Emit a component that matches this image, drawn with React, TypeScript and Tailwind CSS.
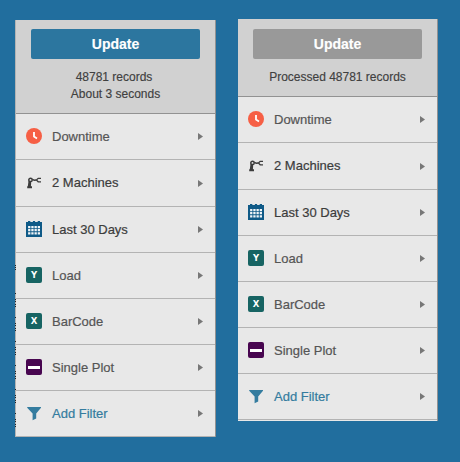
import type { ReactNode } from "react";

const Clock = () => (
  <svg width="16" height="16" viewBox="0 0 16 16">
    <circle cx="8" cy="8" r="8" fill="#f65f45" />
    <path d="M8 4V8.6L11 10.4" fill="none" stroke="#fff" strokeWidth="1.8" />
  </svg>
);

const Robot = () => (
  <svg width="16" height="16" viewBox="0 0 16 16" fill="none" stroke="#3c3c3c">
    <circle cx="4.5" cy="4.9" r="1.7" strokeWidth="1.5" />
    <path d="M6.3 4.4L8.2 5.2L10.2 5" strokeWidth="1.4" />
    <path d="M15 3.3H12.2L10.4 5L12.2 6.8H15" strokeWidth="1.3" />
    <path d="M2.5 6H5.3L4.9 11.2H6V13.3H1.2V11.2H1.8Z" fill="#3c3c3c" stroke="none" />
  </svg>
);

const Calendar = () => (
  <svg width="16" height="16" viewBox="0 0 16 16">
    <path d="M0 1H2V0H4.3V1H6.9V0H9.1V1H11.7V0H14V1H16V16H0Z" fill="#0f5a87" />
    <path
      d="M2.1 6.1H14M2.1 9.2H14M2.1 12.3H14"
      stroke="#f2f6f9"
      strokeWidth="2.2"
      strokeDasharray="2.3 0.9"
    />
  </svg>
);

const Letter = ({ children }: { children: string }) => (
  <span className="flex h-4 w-4 items-center justify-center rounded-[2px] bg-[#176463] font-['DejaVu_Sans',sans-serif] text-[8.5px] leading-none font-bold text-white">
    {children}
  </span>
);

const Plot = () => (
  <span className="flex h-4 w-4 items-center justify-center rounded-[2px] bg-[#480650]">
    <span className="h-[3px] w-3 bg-white" />
  </span>
);

const Funnel = () => (
  <svg width="16" height="16" viewBox="0 0 16 16">
    <path d="M1.2 2H15V2.8L10.2 8.5V13.4L6.6 15.2V8.5L1.2 2.8Z" fill="#347c9f" />
  </svg>
);

const rows: { label: string; icon: ReactNode; color: string; height: string }[] = [
  { label: "Downtime", icon: <Clock />, color: "text-[#555]", height: "h-[46px]" },
  { label: "2 Machines", icon: <Robot />, color: "text-[#3c3c3c]", height: "h-[47px]" },
  { label: "Last 30 Days", icon: <Calendar />, color: "text-[#3c3c3c]", height: "h-[46px]" },
  { label: "Load", icon: <Letter>Y</Letter>, color: "text-[#555]", height: "h-[46px]" },
  { label: "BarCode", icon: <Letter>X</Letter>, color: "text-[#555]", height: "h-[46px]" },
  { label: "Single Plot", icon: <Plot />, color: "text-[#555]", height: "h-[46px]" },
  { label: "Add Filter", icon: <Funnel />, color: "text-[#347c9f]", height: "h-[46px]" },
];

const Rows = () => (
  <>
    {rows.map((r) => (
      <div
        key={r.label}
        className={`flex items-center border-b border-[#b3b3b3] pr-3 pl-[10px] ${r.height} ${r.color}`}
      >
        <span className="mb-px block h-4 w-4">{r.icon}</span>
        <span className="ml-[10px] flex-1 text-[13px] leading-4 [-webkit-text-stroke:0.2px]">
          {r.label}
        </span>
        <svg width="5" height="7" viewBox="0 0 5 7">
          <path d="M0 0L5 3.5L0 7Z" fill="#777" />
        </svg>
      </div>
    ))}
  </>
);

// Dotted specks running down the panel's left border, repeating every 24px.
const marks = [
  265, 267, 269, 293, 299, 301, 304, 306, 317, 323, 325, 328, 330, 341, 347, 349, 352, 354, 365,
  371, 373, 376, 378, 389, 395, 397, 400, 402, 413, 419, 421, 424, 426,
];

export default function App() {
  return (
    <div className="flex h-[462px] w-[460px] items-start bg-[#216e9e] font-['Liberation_Sans',Arial,sans-serif]">
      <section className="relative mt-5 ml-[15px] w-[201px] border-x border-l-[#b3b3b3] border-r-[#929292] bg-[#e8e8e8]">
        <header className="h-[94px] border-b border-[#929292] bg-[#d1d1d1] pt-[9px] text-center text-[12px] leading-[17px] text-[#404040] [-webkit-text-stroke:0.15px]">
          <button className="mx-auto mb-[10px] block h-[30px] w-[169px] rounded-[2px] bg-[#2c769f] text-[14px] font-bold text-white">
            Update
          </button>
          <p className="pr-[3px]">48781 records</p>
          <p>About 3 seconds</p>
        </header>
        <Rows />
        <svg className="absolute top-0 -left-px" width="1" height="417" viewBox="0 20 1 417">
          {marks.map((y) => (
            <rect key={y} x="0" y={y} width="1" height="1" fill="#222" />
          ))}
        </svg>
      </section>
      <section className="mt-[19px] ml-[22px] h-[402px] w-[200px] border-r border-[#929292] bg-[#e8e8e8]">
        <header className="h-[78px] border-b border-[#929292] bg-[#d1d1d1] pt-[10px] text-center text-[12px] leading-[17px] text-[#404040] [-webkit-text-stroke:0.15px]">
          <button className="mx-auto mb-[10px] block h-[30px] w-[169px] rounded-[2px] bg-[#999] text-[14px] font-bold text-white">
            Update
          </button>
          <p>Processed 48781 records</p>
        </header>
        <Rows />
      </section>
    </div>
  );
}
